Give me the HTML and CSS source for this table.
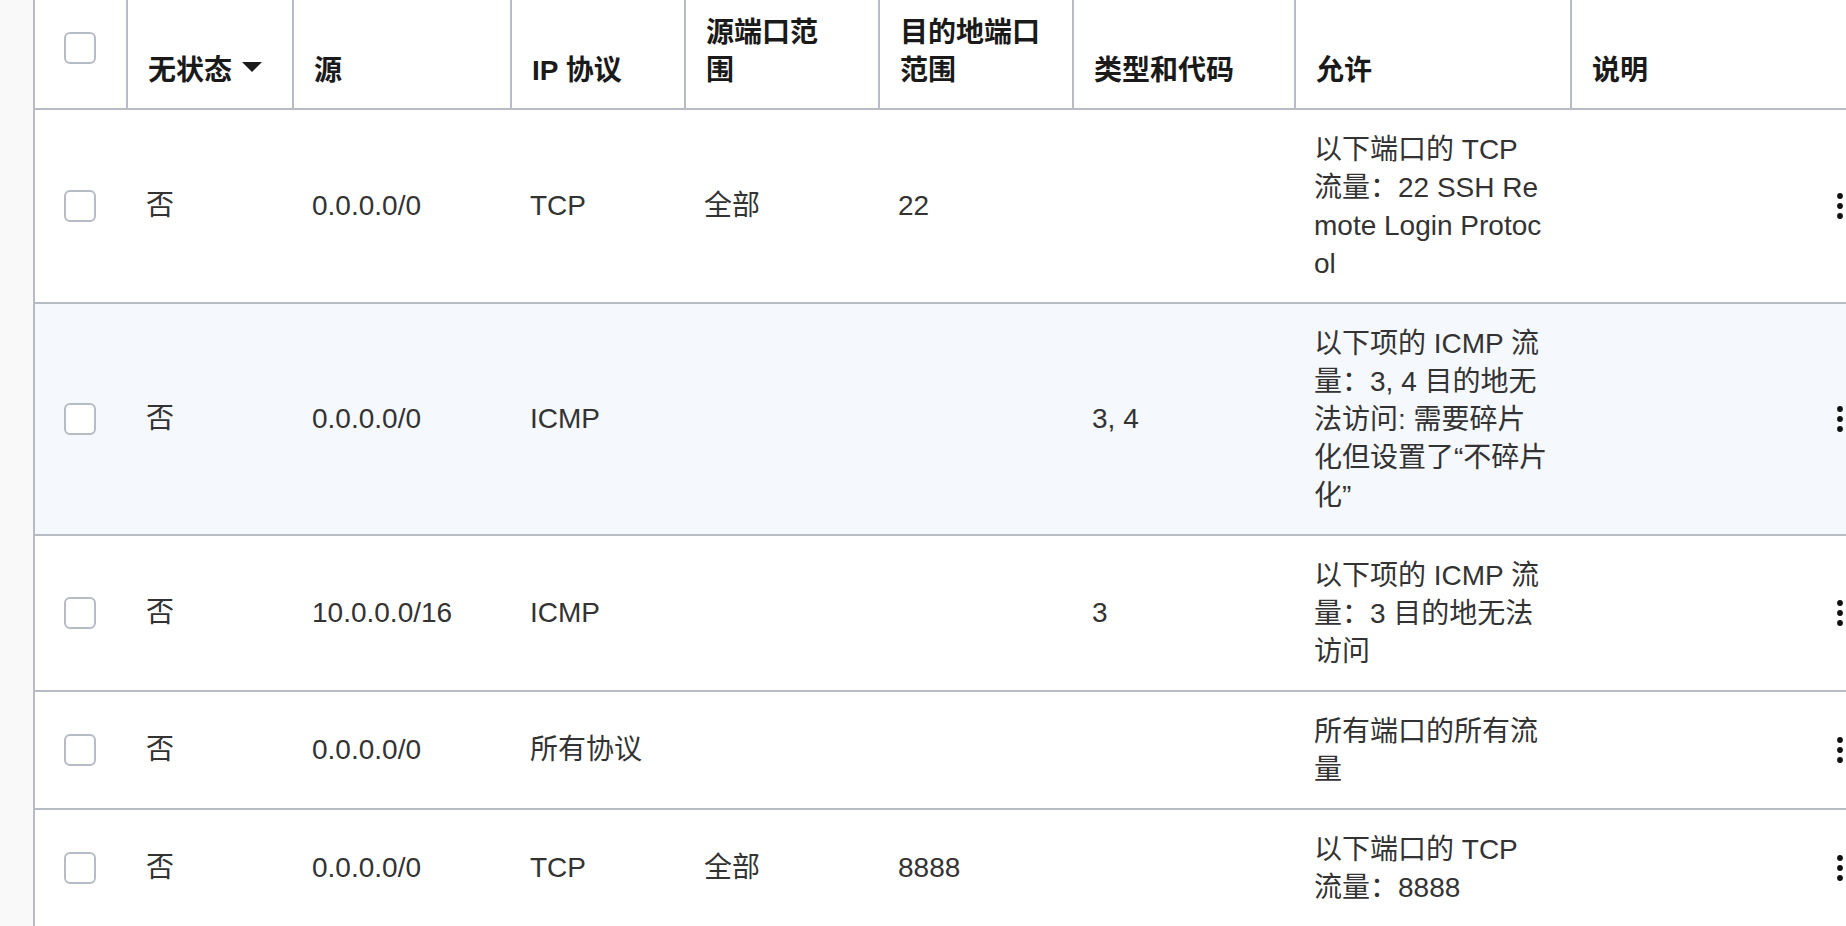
FILE: index.html
```html
<!DOCTYPE html>
<html lang="zh-CN">
<head>
    <meta charset="UTF-8">
    <meta name="viewport" content="width=device-width, initial-scale=1.0">
    <title>入站规则</title>
    <link rel="stylesheet" href="styles.css">
</head>
<body>

<div class="rules">
    <!-- Header -->
    <div class="row head">
        <div class="th check"><span class="box"></span></div>
        <div class="th nowrap"><span>无状态<svg class="caret" width="20" height="10" viewBox="0 0 20 10"><path d="M0 0H20L10 10Z"/></svg></span></div>
        <div class="th">源</div>
        <div class="th">IP 协议</div>
        <div class="th">源端口范围</div>
        <div class="th wide">目的地端口范围</div>
        <div class="th">类型和代码</div>
        <div class="th">允许</div>
        <div class="th plain">说明</div>
        <div class="th plain"></div>
    </div>

    <!-- Rules -->
    <div class="row">
        <div class="td check"><span class="box"></span></div>
        <div class="td">否</div>
        <div class="td">0.0.0.0/0</div>
        <div class="td">TCP</div>
        <div class="td">全部</div>
        <div class="td">22</div>
        <div class="td"></div>
        <div class="td allow">以下端口的 TCP 流量：22 SSH Remote Login Protocol</div>
        <div class="td"></div>
        <div class="td menu"><svg class="kebab" width="6" height="26" viewBox="0 0 6 26"><circle cx="3" cy="3" r="2.9"/><circle cx="3" cy="13" r="2.9"/><circle cx="3" cy="23" r="2.9"/></svg></div>
    </div>

    <div class="row alt">
        <div class="td check"><span class="box"></span></div>
        <div class="td">否</div>
        <div class="td">0.0.0.0/0</div>
        <div class="td">ICMP</div>
        <div class="td"></div>
        <div class="td"></div>
        <div class="td">3, 4</div>
        <div class="td allow">以下项的 ICMP 流量：3, 4 目的地无法访问: 需要碎片化但设置了“不碎片化”</div>
        <div class="td"></div>
        <div class="td menu"><svg class="kebab" width="6" height="26" viewBox="0 0 6 26"><circle cx="3" cy="3" r="2.9"/><circle cx="3" cy="13" r="2.9"/><circle cx="3" cy="23" r="2.9"/></svg></div>
    </div>

    <div class="row">
        <div class="td check"><span class="box"></span></div>
        <div class="td">否</div>
        <div class="td">10.0.0.0/16</div>
        <div class="td">ICMP</div>
        <div class="td"></div>
        <div class="td"></div>
        <div class="td">3</div>
        <div class="td allow">以下项的 ICMP 流量：3 目的地无法访问</div>
        <div class="td"></div>
        <div class="td menu"><svg class="kebab" width="6" height="26" viewBox="0 0 6 26"><circle cx="3" cy="3" r="2.9"/><circle cx="3" cy="13" r="2.9"/><circle cx="3" cy="23" r="2.9"/></svg></div>
    </div>

    <div class="row">
        <div class="td check"><span class="box"></span></div>
        <div class="td">否</div>
        <div class="td">0.0.0.0/0</div>
        <div class="td">所有协议</div>
        <div class="td"></div>
        <div class="td"></div>
        <div class="td"></div>
        <div class="td allow">所有端口的所有流量</div>
        <div class="td"></div>
        <div class="td menu"><svg class="kebab" width="6" height="26" viewBox="0 0 6 26"><circle cx="3" cy="3" r="2.9"/><circle cx="3" cy="13" r="2.9"/><circle cx="3" cy="23" r="2.9"/></svg></div>
    </div>

    <div class="row">
        <div class="td check"><span class="box"></span></div>
        <div class="td">否</div>
        <div class="td">0.0.0.0/0</div>
        <div class="td">TCP</div>
        <div class="td">全部</div>
        <div class="td">8888</div>
        <div class="td"></div>
        <div class="td allow">以下端口的 TCP 流量：8888</div>
        <div class="td"></div>
        <div class="td menu"><svg class="kebab" width="6" height="26" viewBox="0 0 6 26"><circle cx="3" cy="3" r="2.9"/><circle cx="3" cy="13" r="2.9"/><circle cx="3" cy="23" r="2.9"/></svg></div>
    </div>
</div>

</body>
</html>
```

FILE: styles.css
```css
body {
    margin: 0;
    background-color: #f9f9f9;
    font-family: "Liberation Sans", "Noto Sans CJK SC", sans-serif;
    font-size: 28px;
    line-height: 38px;
    color: #333;
    overflow: hidden;
}
.rules {
    width: 1900px;
    margin-left: 33px;
    border-left: 2px solid #b6bbc4;
    background-color: #fff;
}
.row {
    display: grid;
    grid-template-columns: 93px 166px 218px 174px 194px 194px 222px 276px 250px 60px;
    border-bottom: 2px solid #b6bbc4;
}
.row.alt {
    background-color: #f5f8fc;
}
.head {
    height: 110px;
    box-sizing: border-box;
}
.th {
    display: flex;
    align-items: flex-end;
    padding: 0 36px 18px 20px;
    border-right: 2px solid #b6bbc4;
    box-sizing: border-box;
    font-weight: bold;
    color: #1a1a1a;
}
.th.wide {
    padding-right: 28px;
}
.th.plain {
    border-right: none;
}
.th.nowrap {
    white-space: nowrap;
}
.th.check {
    align-items: flex-start;
    padding: 32px 0 0 29px;
}
.caret {
    margin-left: 10px;
    vertical-align: 8px;
    fill: #1a1a1a;
}
.td {
    align-self: center;
    padding: 20px 18px;
}
.td.check {
    padding: 20px 0 20px 29px;
}
.td.allow {
    padding: 21px 22px 19px 18px;
    word-break: break-all;
}
.td.menu {
    padding: 20px 0 20px 15px;
}
.box {
    display: block;
    width: 32px;
    height: 32px;
    box-sizing: border-box;
    border: 2px solid #b6bbc4;
    border-radius: 6px;
    background-color: #fff;
}
.kebab {
    display: block;
    fill: #111;
}
```
